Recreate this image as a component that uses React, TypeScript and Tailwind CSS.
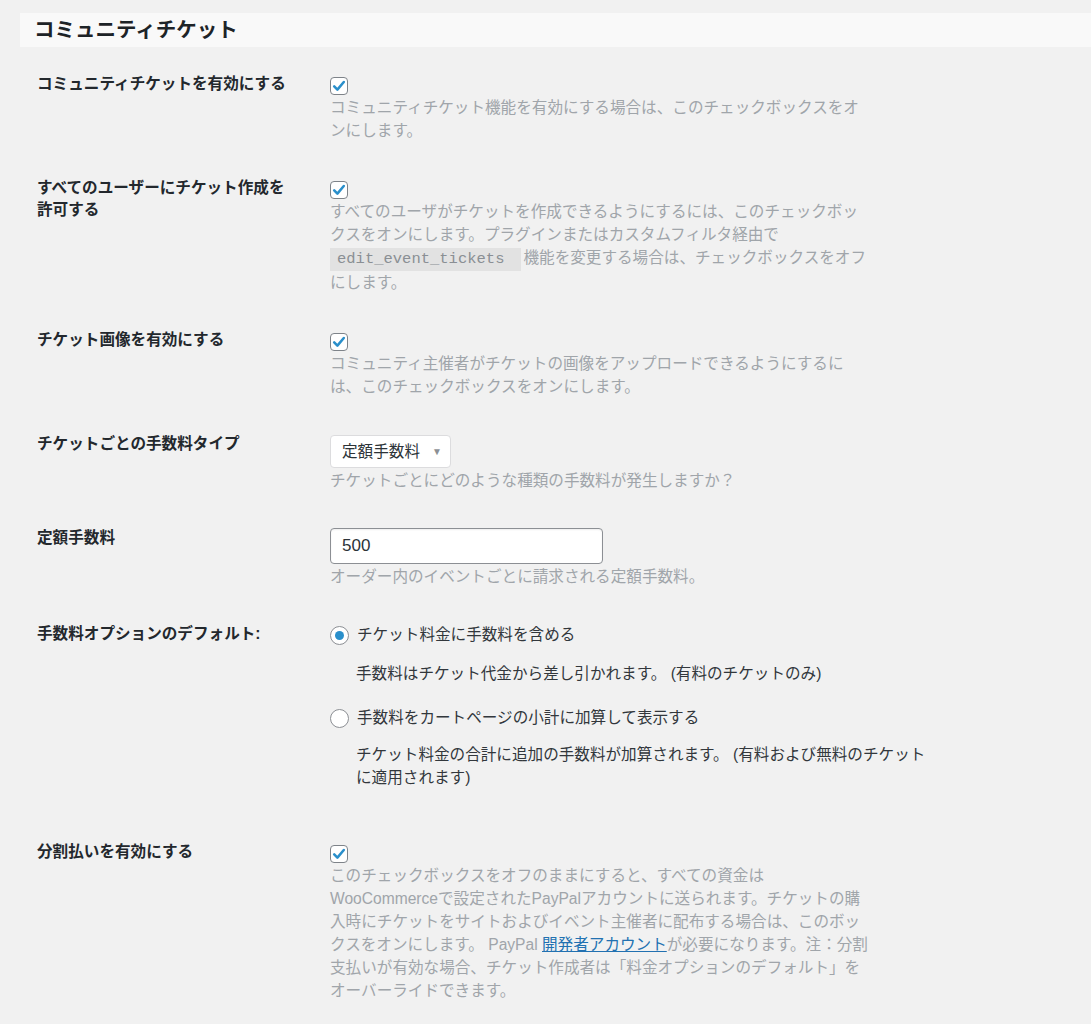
import React from 'react';

const FONT = "font-['Liberation_Sans','Noto_Sans_CJK_JP',sans-serif]";

function CheckBox() {
  return (
    <span className="mt-[4px] flex h-[18px] w-[18px] items-center justify-center rounded-[4px] border border-[#7e8389] bg-white">
      <svg viewBox="0 0 20 20" className="h-[16px] w-[16px]">
        <path d="M4 10.5 L8 14.5 L16 5" fill="none" stroke="#2a8fcb" strokeWidth="3.2" strokeLinecap="round" strokeLinejoin="round" />
      </svg>
    </span>
  );
}

function Radio({ checked }: { checked?: boolean }) {
  return (
    <span className="mt-[3px] flex h-[19px] w-[19px] shrink-0 items-center justify-center rounded-full border border-[#8c8f94] bg-white">
      {checked && <span className="h-[9px] w-[9px] rounded-full bg-[#2a8fcb]" />}
    </span>
  );
}

function Desc({ children }: { children: React.ReactNode }) {
  return <p className="mt-[1px] text-[15.6px] leading-[23px] text-[#a0a5aa]">{children}</p>;
}

function Row({ label, children, className = '' }: { label: React.ReactNode; children: React.ReactNode; className?: string }) {
  return (
    <div className={`grid grid-cols-[293px_1fr] items-start ${className}`}>
      <div className="text-[15.6px] leading-[22px] font-bold text-[#23282d]">{label}</div>
      <div className="flex flex-col items-start">{children}</div>
    </div>
  );
}

export default function App() {
  return (
    <div className={`min-h-screen bg-[#f1f1f1] ${FONT}`}>
      <div className="pt-[13px] pl-[20px]">
        <h2 className="flex h-[34px] items-center bg-[#f9f9f9] pl-[14px] text-[20.5px] font-bold text-[#1d2327]">
          コミュニティチケット
        </h2>
      </div>

      <div className="flex flex-col gap-[35px] pt-[26px] pl-[37px] pb-[24px]">
        <Row label="コミュニティチケットを有効にする">
          <CheckBox />
          <Desc>
            コミュニティチケット機能を有効にする場合は、このチェックボックスをオ
            <br />
            ンにします。
          </Desc>
        </Row>

        <Row
          label={
            <>
              すべてのユーザーにチケット作成を
              <br />
              許可する
            </>
          }
        >
          <CheckBox />
          <Desc>
            すべてのユーザがチケットを作成できるようにするには、このチェックボッ
            <br />
            クスをオンにします。プラグインまたはカスタムフィルタ経由で
            <br />
            <code className="inline-block h-[23px] bg-[#e2e2e2] pl-[7px] pr-[17px] font-['Liberation_Mono',monospace] text-[15.5px] leading-[23px] text-[#8a8f94]">
              edit_event_tickets
            </code>
            <span className="ml-[2px]">機能を変更する場合は、チェックボックスをオフ</span>
            <br />
            にします。
          </Desc>
        </Row>

        <Row label="チケット画像を有効にする">
          <CheckBox />
          <Desc>
            コミュニティ主催者がチケットの画像をアップロードできるようにするに
            <br />
            は、このチェックボックスをオンにします。
          </Desc>
        </Row>

        <Row label="チケットごとの手数料タイプ">
          <div className="mt-[2px] flex h-[33px] w-[121px] items-center justify-between rounded-[4px] border border-[#dcdcde] bg-white pl-[11px] pr-[8px] text-[15.6px] text-[#2c3338]">
            <span>定額手数料</span>
            <span className="text-[10px] text-[#8c8f94]">▼</span>
          </div>
          <Desc>チケットごとにどのような種類の手数料が発生しますか？</Desc>
        </Row>

        <Row label="定額手数料">
          <div className="mt-[1px] flex h-[36px] w-[273px] items-center rounded-[4px] border border-[#8c8f94] bg-white pl-[11px] text-[17px] text-[#2c3338] shadow-[inset_0_1px_2px_rgba(0,0,0,0.07)]">
            500
          </div>
          <Desc>オーダー内のイベントごとに請求される定額手数料。</Desc>
        </Row>

        <Row label="手数料オプションのデフォルト:" className="mb-[17px]">
          <div className="flex items-start gap-[8px] text-[15.6px] leading-[23px] text-[#32373c]">
            <Radio checked />
            <span>チケット料金に手数料を含める</span>
          </div>
          <p className="mt-[16px] pl-[26px] text-[15.6px] leading-[23px] text-[#32373c]">
            手数料はチケット代金から差し引かれます。 (有料のチケットのみ)
          </p>
          <div className="mt-[21px] flex items-start gap-[8px] text-[15.6px] leading-[23px] text-[#32373c]">
            <Radio />
            <span>手数料をカートページの小計に加算して表示する</span>
          </div>
          <p className="mt-[14px] pl-[26px] text-[15.6px] leading-[23px] text-[#32373c]">
            チケット料金の合計に追加の手数料が加算されます。 (有料および無料のチケット
            <br />
            に適用されます)
          </p>
        </Row>

        <Row label="分割払いを有効にする">
          <CheckBox />
          <Desc>
            このチェックボックスをオフのままにすると、すべての資金は
            <br />
            WooCommerceで設定されたPayPalアカウントに送られます。チケットの購
            <br />
            入時にチケットをサイトおよびイベント主催者に配布する場合は、このボッ
            <br />
            クスをオンにします。 PayPal{' '}
            <a href="#" className="text-[#2271b1] underline">
              開発者アカウント
            </a>
            が必要になります。注：分割
            <br />
            支払いが有効な場合、チケット作成者は「料金オプションのデフォルト」を
            <br />
            オーバーライドできます。
          </Desc>
        </Row>
      </div>
    </div>
  );
}
